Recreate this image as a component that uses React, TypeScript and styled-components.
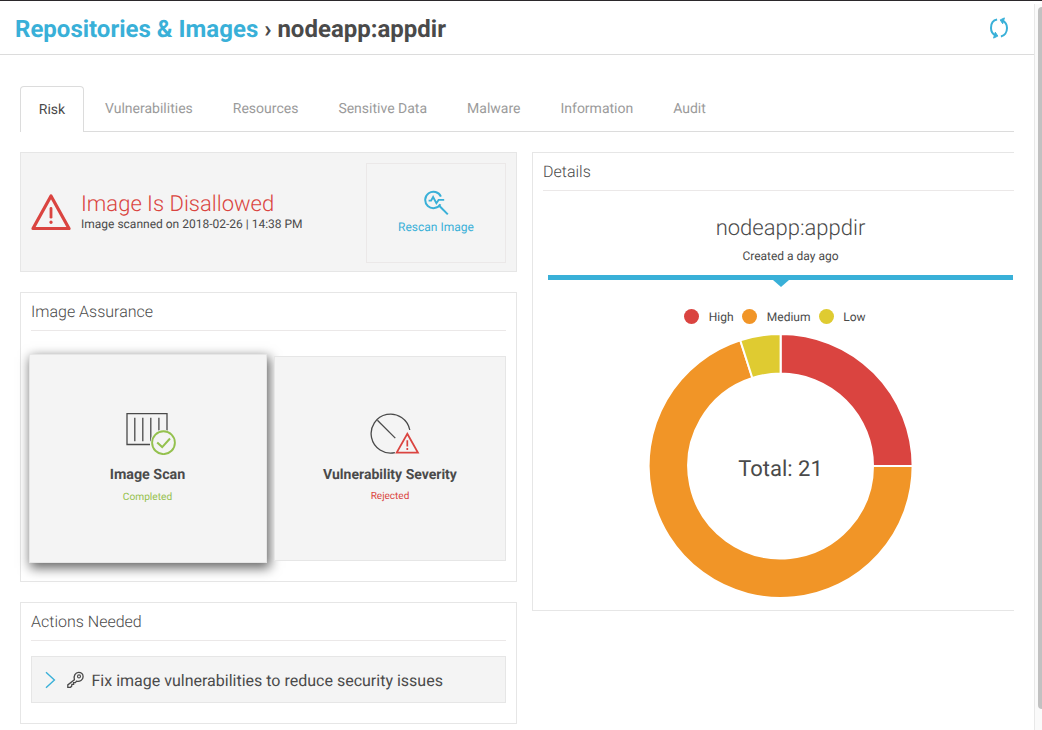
import React from 'react';
import styled, { createGlobalStyle, css } from 'styled-components';

const c = {
  blue: '#39b0d8',
  text: '#4a4a4a',
  muted: '#9b9b9b',
  red: '#da4440',
  orange: '#f19527',
  yellow: '#dfcb31',
  green: '#94c14e',
  border: '#e6e6e6',
  panel: '#f4f4f4',
};

const GlobalStyle = createGlobalStyle`
  * { box-sizing: border-box; }
  body {
    margin: 0;
    background: #fff;
    color: ${c.text};
    font-family: Roboto, 'Liberation Sans', sans-serif;
    text-rendering: geometricPrecision;
  }
  svg { display: block; flex: none; }
`;

const Page = styled.div`
  display: flex;
  width: 1042px;
  height: 730px;
  overflow: hidden;
  border-top: 1px solid #2b282b;
`;

const Main = styled.div`
  width: 1034px;
  flex: none;
`;

const ScrollTrack = styled.div`
  width: 8px;
  margin-top: 3px;
  padding: 3px 0 0 3px;
  background: #fafafa;
  border-left: 1px solid #e8e8e8;
`;

const ScrollThumb = styled.div`
  height: 702px;
  background: #c1c1c1;
  border-radius: 4px 0 0 4px;
`;

const Header = styled.header`
  display: flex;
  justify-content: space-between;
  align-items: center;
  height: 54px;
  padding: 0 24px 0 15px;
  border-bottom: 1px solid #dcdcdc;
`;

const Breadcrumb = styled.h1`
  margin: 0;
  padding-top: 2px;
  font-size: 24px;
  line-height: 28px;
  font-weight: 700;
  white-space: nowrap;
`;

const BreadcrumbLink = styled.span`
  color: ${c.blue};
`;

const Content = styled.div`
  padding: 31px 20px 0;
`;

const Tabs = styled.nav`
  display: flex;
  height: 46px;
  border-bottom: 1px solid #dcdcdc;
`;

const Tab = styled.div<{ $active?: boolean }>`
  height: 46px;
  padding: 0 20px;
  line-height: 46px;
  text-align: center;
  font-size: 14px;
  color: ${c.muted};
  white-space: nowrap;
  ${(p) =>
    p.$active &&
    css`
      width: 64px;
      margin-right: 1px;
      padding: 0;
      color: ${c.text};
      background: #fff;
      border: 1px solid #dcdcdc;
      border-bottom: 0;
      border-radius: 4px 4px 0 0;
    `}
`;

const Columns = styled.div`
  display: flex;
  align-items: flex-start;
  gap: 15px;
  margin-top: 20px;
`;

const LeftColumn = styled.div`
  display: flex;
  flex-direction: column;
  gap: 20px;
  width: 497px;
`;

const Card = styled.section<{ $height: number }>`
  height: ${(p) => p.$height}px;
  padding: 0 10px;
  border: 1px solid ${c.border};
`;

const DetailsCard = styled(Card)`
  flex: 1;
  padding-right: 0;
  border-right: 0;
`;

const CardTitle = styled.h2`
  height: 38px;
  margin: 0;
  border-bottom: 1px solid #ebe8e8;
  font-size: 16px;
  line-height: 38px;
  font-weight: 300;
`;

const Banner = styled.section`
  display: flex;
  align-items: flex-start;
  height: 120px;
  padding: 10px 10px 0;
  background: ${c.panel};
  border: 1px solid ${c.border};
`;

const BannerIcon = styled.div`
  padding-top: 30px;
`;

const BannerText = styled.div`
  flex: 1;
  padding: 30px 0 0 10px;
  white-space: nowrap;
`;

const BannerTitle = styled.div`
  color: ${c.red};
  font-size: 22px;
  line-height: 24px;
  font-weight: 300;
`;

const BannerSub = styled.div`
  margin-top: -1px;
  font-size: 12px;
  line-height: 16px;
`;

const Rescan = styled.div`
  display: flex;
  flex-direction: column;
  align-items: center;
  gap: 3px;
  width: 140px;
  height: 100px;
  padding-top: 26px;
  border: 1px solid #ebe8e8;
  color: ${c.blue};
  font-size: 12px;
  line-height: 16px;
`;

const Tiles = styled.div`
  display: grid;
  grid-template-columns: 233px 232px;
  gap: 10px;
  margin-top: 25px;
`;

const TileName = styled.div`
  margin-top: 10px;
  font-size: 14px;
  line-height: 20px;
  font-weight: 700;
  white-space: nowrap;
`;

const TileStatus = styled.div<{ $color: string }>`
  margin-top: 4px;
  color: ${(p) => p.$color};
  font-size: 10px;
  line-height: 15px;
`;

const Tile = styled.div<{ $raised?: boolean }>`
  display: flex;
  flex-direction: column;
  align-items: center;
  height: 205px;
  padding-top: 54px;
  background: ${c.panel};
  border: 1px solid ${c.border};
  ${(p) =>
    p.$raised &&
    css`
      height: 209px;
      margin: -2px -3px -2px -2px;
      padding: 56px 1px 0 0;
      box-shadow: 2px 4px 11px 1px rgba(0, 0, 0, 0.6);

      ${TileName} {
        font-size: 14.3px;
      }
      ${TileStatus} {
        margin-top: 5px;
        font-size: 10.2px;
      }
    `}
`;

const TileIcon = styled.div<{ $indent: number }>`
  padding-left: ${(p) => p.$indent}px;
`;

const Action = styled.div`
  display: flex;
  align-items: center;
  height: 47px;
  margin-top: 15px;
  padding-left: 12.5px;
  background: ${c.panel};
  border: 1px solid ${c.border};
  font-size: 16px;
  white-space: nowrap;
`;

const ActionLabel = styled.span`
  padding: 2px 0 0 8px;
`;

const ImageName = styled.div`
  margin: 24px 0 0 24px;
  text-align: center;
  font-size: 22px;
  line-height: 28px;
  font-weight: 300;
`;

const Created = styled.div`
  margin: 5px 0 0 24px;
  text-align: center;
  font-size: 12px;
  line-height: 16px;
`;

const Ribbon = styled.div`
  height: 5px;
  margin: 11px 1px 0 5px;
  background: ${c.blue};
`;

const RibbonArrow = styled.div`
  width: 16px;
  height: 7px;
  margin-left: 230px;
  border: 8px solid transparent;
  border-top: 7px solid ${c.blue};
  border-bottom: 0;
`;

const Legend = styled.div`
  display: flex;
  align-items: center;
  height: 16px;
  margin: 21px 0 0 141px;
  font-size: 12px;
`;

const LegendItem = styled.div<{ $width: number }>`
  display: flex;
  align-items: center;
  gap: 9.8px;
  width: ${(p) => p.$width}px;
`;

const LegendLabel = styled.span`
  padding-top: 2px;
`;

const Dot = styled.i<{ $color: string }>`
  width: 15px;
  height: 15px;
  border-radius: 50%;
  background: ${(p) => p.$color};
`;

const Chart = styled.div`
  margin: 10px 0 0 106px;
`;

const RefreshIcon = () => (
  <svg width="22" height="22" viewBox="0 0 22 22" fill="none" stroke={c.blue} strokeWidth="2">
    <path d="M9.1 2.6C5.4 3.2 3 6.5 3 11c0 3.4 1.8 6.3 4.7 7.7" />
    <path d="M12.9 19.4c3.6-.7 6.1-4.1 6.1-8.4 0-3.4-1.8-6.3-4.7-7.7" />
    <path d="M16.4 0.9l-4.2 2 2.5 3.9z" strokeWidth="1" fill={c.blue} />
    <path d="M5.6 21.1l4.2-2-2.5-3.9z" strokeWidth="1" fill={c.blue} />
  </svg>
);

const WarningIcon = () => (
  <svg width="40" height="38" viewBox="0 0 40 38" fill="none" stroke={c.red}>
    <path d="M20 3L38 35.5H2z" strokeWidth="3.2" strokeLinejoin="round" />
    <path d="M20 15.4v8.8" strokeWidth="2.8" strokeLinecap="round" />
    <path d="M20 29.1v.2" strokeWidth="3.2" strokeLinecap="round" />
  </svg>
);

const RescanIcon = () => (
  <svg width="26" height="26" viewBox="0 0 26 26" fill="none" stroke={c.blue} strokeWidth="2">
    <path d="M17.9 6.6A8.2 8.2 0 1 0 17.4 14.2" />
    <path d="M5.6 10.6h2.5l2-3.6 3.3 6.2 2.2-3.3h5.6" strokeWidth="1.9" />
    <path d="M16.2 15.8l8.6 8.6" />
  </svg>
);

const ScanIcon = () => (
  <svg width="52" height="44" viewBox="0 0 52 44" fill="none" stroke={c.text} strokeWidth="1.3">
    <path d="M26 33.5H3V2.6h40v18" />
    <path d="M10.8 6.8v23.4M18.8 6.8v23.4M26.8 6.8v23.4M34.9 6.8v12.6" />
    <circle cx="39.5" cy="31.7" r="13" fill={c.panel} stroke="none" />
    <circle cx="39.5" cy="31.7" r="11.4" stroke={c.green} strokeWidth="1.9" />
    <path d="M33.2 31.4l5 4.7 7.8-8.6" stroke={c.green} strokeWidth="2" />
  </svg>
);

const SeverityIcon = () => (
  <svg width="52" height="44" viewBox="0 0 52 44" fill="none" stroke={c.text} strokeWidth="1.3">
    <path d="M26.9 41.6A19.5 19.5 0 1 1 41.8 19" />
    <path d="M9.4 9.3L27.3 27.1" />
    <path d="M39.3 22.8L49.9 41.6H28.7z" stroke={c.red} strokeWidth="1.8" fill={c.panel} />
    <path d="M39.3 29.3v6.1M39.3 37v2" stroke={c.red} strokeWidth="1.7" />
  </svg>
);

const ChevronIcon = () => (
  <svg width="11" height="18" viewBox="0 0 11 18" fill="none" stroke={c.blue} strokeWidth="1.4">
    <path d="M1 1.2L9.4 9 1 16.8" />
  </svg>
);

const KeyIcon = () => (
  <svg width="17" height="18" viewBox="0 0 17 18" fill="none" stroke={c.text} strokeWidth="1.3">
    <path d="M7.4 8.7C6.3 5 8.4 1.3 11.6 1.3c2.6 0 4.5 1.9 4.5 4.4 0 3.2-3.3 5.3-6.6 4.5l-1.1 1.5H6.6v1.7H4.9l-.3 1.9-1.2 1H.8v-2.4z" />
    <circle cx="12" cy="5.4" r="1.5" strokeWidth="1.1" />
  </svg>
);

const IconGap = styled.div`
  padding-left: 11px;
`;

const point = (deg: number, r: number) => {
  const a = (deg * Math.PI) / 180;
  return `${131.6 + r * Math.sin(a)} ${132 - r * Math.cos(a)}`;
};

const slice = (from: number, to: number) => {
  const large = to - from > 180 ? 1 : 0;
  return `M${point(from, 132)}A132 132 0 ${large} 1 ${point(to, 132)}L${point(to, 92.4)}A92.4 92.4 0 ${large} 0 ${point(from, 92.4)}Z`;
};

const slices = [
  { name: 'High', color: c.red, from: 0, to: 90, width: 58 },
  { name: 'Medium', color: c.orange, from: 90, to: 342.2, width: 76.5 },
  { name: 'Low', color: c.yellow, from: 342.2, to: 360, width: 60 },
];

const tabs = ['Vulnerabilities', 'Resources', 'Sensitive Data', 'Malware', 'Information', 'Audit'];

export default function App() {
  return (
    <>
      <GlobalStyle />
      <Page>
        <Main>
          <Header>
            <Breadcrumb>
              <BreadcrumbLink>Repositories &amp; Images</BreadcrumbLink> › nodeapp:appdir
            </Breadcrumb>
            <RefreshIcon />
          </Header>
          <Content>
            <Tabs>
              <Tab $active>Risk</Tab>
              {tabs.map((name) => (
                <Tab key={name}>{name}</Tab>
              ))}
            </Tabs>
            <Columns>
              <LeftColumn>
                <Banner>
                  <BannerIcon>
                    <WarningIcon />
                  </BannerIcon>
                  <BannerText>
                    <BannerTitle>Image Is Disallowed</BannerTitle>
                    <BannerSub>Image scanned on 2018-02-26 | 14:38 PM</BannerSub>
                  </BannerText>
                  <Rescan>
                    <RescanIcon />
                    Rescan Image
                  </Rescan>
                </Banner>
                <Card $height={290}>
                  <CardTitle>Image Assurance</CardTitle>
                  <Tiles>
                    <Tile $raised>
                      <TileIcon $indent={5}>
                        <ScanIcon />
                      </TileIcon>
                      <TileName>Image Scan</TileName>
                      <TileStatus $color={c.green}>Completed</TileStatus>
                    </Tile>
                    <Tile>
                      <TileIcon $indent={7}>
                        <SeverityIcon />
                      </TileIcon>
                      <TileName>Vulnerability Severity</TileName>
                      <TileStatus $color={c.red}>Rejected</TileStatus>
                    </Tile>
                  </Tiles>
                </Card>
                <Card $height={122}>
                  <CardTitle>Actions Needed</CardTitle>
                  <Action>
                    <ChevronIcon />
                    <IconGap>
                      <KeyIcon />
                    </IconGap>
                    <ActionLabel>Fix image vulnerabilities to reduce security issues</ActionLabel>
                  </Action>
                </Card>
              </LeftColumn>
              <DetailsCard $height={459}>
                <CardTitle>Details</CardTitle>
                <ImageName>nodeapp:appdir</ImageName>
                <Created>Created a day ago</Created>
                <Ribbon />
                <RibbonArrow />
                <Legend>
                  {slices.map((s) => (
                    <LegendItem key={s.name} $width={s.width}>
                      <Dot $color={s.color} />
                      <LegendLabel>{s.name}</LegendLabel>
                    </LegendItem>
                  ))}
                </Legend>
                <Chart>
                  <svg width="264" height="264" viewBox="0 0 264 264">
                    {slices.map((s) => (
                      <path key={s.name} d={slice(s.from, s.to)} fill={s.color} stroke="#fff" strokeWidth="2" />
                    ))}
                    <text x="131.5" y="142" textAnchor="middle" fontSize="22" fill={c.text}>
                      Total: 21
                    </text>
                  </svg>
                </Chart>
              </DetailsCard>
            </Columns>
          </Content>
        </Main>
        <ScrollTrack>
          <ScrollThumb />
        </ScrollTrack>
      </Page>
    </>
  );
}
